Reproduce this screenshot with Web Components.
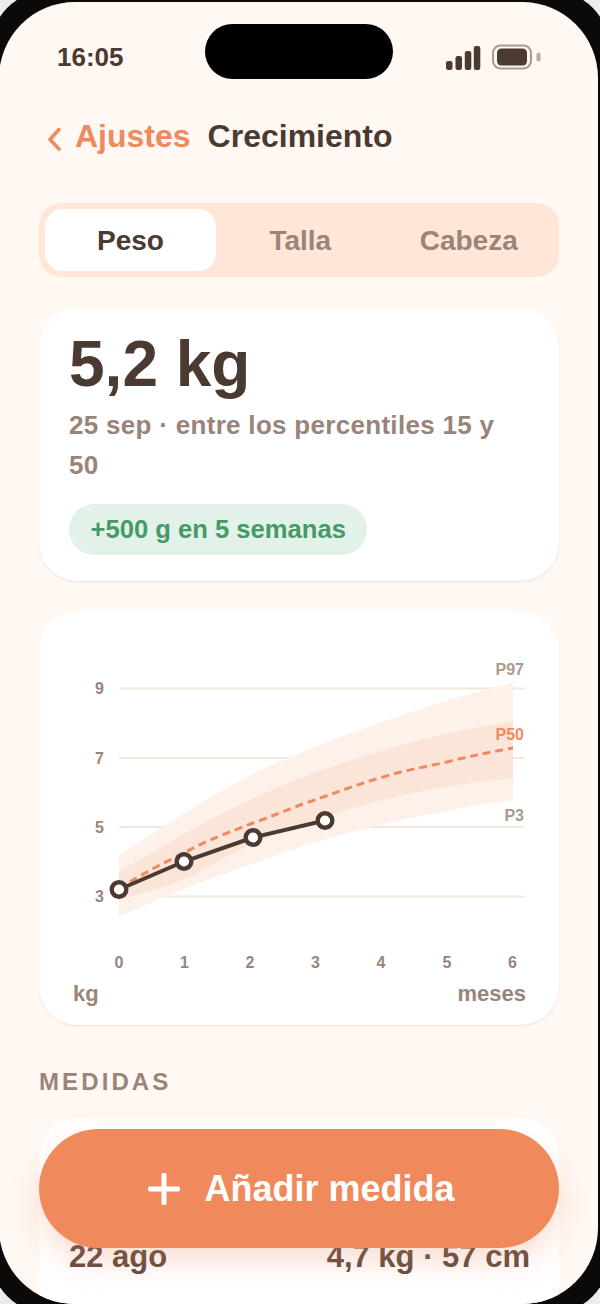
<!DOCTYPE html>
<html lang="es"><head><meta charset="utf-8"><title>Crecimiento</title>
<style>
html,body{margin:0;padding:0;width:600px;height:1304px;overflow:hidden;background:#ececec;font-family:"Liberation Sans",Arial,sans-serif;}
</style></head><body>
<phone-frame>
  <status-bar></status-bar>
  <nav-header back="Ajustes" title="Crecimiento"></nav-header>
  <seg-tabs items="Peso,Talla,Cabeza"></seg-tabs>
  <summary-card value="5,2 kg" sub="25 sep · entre los percentiles 15 y 50" pill="+500 g en 5 semanas"></summary-card>
  <growth-chart></growth-chart>
  <section-title>MEDIDAS</section-title>
  <measure-list>
    <measure-row></measure-row>
    <measure-row date="22 ago" val="4,7 kg · 57 cm"></measure-row>
  </measure-list>
  <add-button slot="fab">Añadir medida</add-button>
</phone-frame>
<script>
function def(name, html){
  customElements.define(name, class extends HTMLElement{
    constructor(){super();this.attachShadow({mode:'open'});}
    connectedCallback(){
      const get=k=>this.getAttribute(k)||'';
      this.shadowRoot.innerHTML=typeof html==='function'?html(get):html;
    }
  });
}
def('phone-frame',`<style>
:host{display:block;width:620px;height:1324px;margin:-10px;box-sizing:border-box;padding:12px 12px 10px 9px;background:#0b0a09;border-radius:60px;}
.screen{position:relative;width:599px;height:1302px;background:#fff8f3;border-radius:76px;overflow:hidden;box-sizing:border-box;padding:0 39px 0 40px;color:#4a3a32;}
.island{position:absolute;left:206px;top:22px;width:188px;height:55px;border-radius:28px;background:#000;}
</style><div class="screen"><div class="island"></div><slot></slot><slot name="fab"></slot></div>`);
def('status-bar',`<style>
:host{display:flex;align-items:center;justify-content:space-between;height:34px;padding:38px 18px 0 18px;}
.t{font:700 26px/34px "Liberation Sans",Arial,sans-serif;color:#4a3a32;}
svg{display:block;}
</style><span class="t">16:05</span>
<svg width="96" height="28" viewBox="0 0 96 28" style="margin-top:1px">
<g fill="#4a3a32"><rect x="1" y="17" width="6.500" height="9" rx="2.200"/><rect x="10.500" y="12" width="6.500" height="14" rx="2.200"/><rect x="19.800" y="7" width="6.500" height="19" rx="2.200"/><rect x="28.800" y="2" width="6.500" height="24" rx="2.200"/>
<rect x="52" y="4.500" width="30" height="17" rx="4.500"/></g>
<rect x="48" y="1.500" width="38" height="23" rx="7.500" fill="none" stroke="#a89a92" stroke-width="2"/>
<rect x="91.500" y="8.500" width="4" height="9" rx="2" fill="#b9aca4"/>
</svg>`);
def('nav-header',g=>`<style>
:host{display:flex;align-items:center;height:40px;margin-top:42px;font:700 32px/40px "Liberation Sans",Arial,sans-serif;}
svg{display:block;margin:6px 14px 0 8px;}
.b{color:#ef8a5e;margin-right:17px;}.t{color:#4a3a32;}
</style><svg width="14" height="24" viewBox="0 0 14 24"><path d="M12 2.500 L3 12.500 L12 22" fill="none" stroke="#ef8a5e" stroke-width="3.600" stroke-linecap="round" stroke-linejoin="round"/></svg><span class="b">${g('back')}</span><span class="t">${g('title')}</span>`);
def('seg-tabs',g=>`<style>
:host{display:grid;grid-template-columns:171px 1fr 1fr;margin-top:47px;height:74px;box-sizing:border-box;padding:6px;background:#ffe6d7;border-radius:22px;font:700 28px/64px "Liberation Sans",Arial,sans-serif;color:#9a8479;text-align:center;}
div{height:62px;}
.on{background:#fff;border-radius:18px;color:#4a3a32;}
</style>${g('items').split(',').map((x,i)=>`<div class="${i?'':'on'}">${x}</div>`).join('')}`);
def('summary-card',g=>`<style>
:host{display:block;margin-top:31px;padding:20px 30px 26px;background:#fff;border-radius:38px;box-shadow:0 1px 2px #f3dfd0;font-family:"Liberation Sans",Arial,sans-serif;}
.v{font:700 64px/72px "Liberation Sans",Arial,sans-serif;color:#4a3a32;}
.s{margin-top:5px;font:700 26px/40px "Liberation Sans",Arial,sans-serif;letter-spacing:.3px;color:#9a8479;}
.p{display:inline-block;margin-top:19px;height:51px;padding:0 21.500px;border-radius:26px;background:#e3f2e9;color:#459a68;font:700 25.600px/51px "Liberation Sans",Arial,sans-serif;}
</style><div class="v">${g('value')}</div><div class="s">${g('sub')}</div><span class="p">${g('pill')}</span>`);
def('growth-chart',`<style>
:host{display:block;margin-top:30px;background:#fff;border-radius:38px;box-shadow:0 1px 2px #f3dfd0;height:414px;}
svg{display:block;}
text{font-family:"Liberation Sans",Arial,sans-serif;font-weight:700;}
</style>
<svg width="520" height="414" viewBox="39 611 520 414">
<g stroke="#f6e7dc" stroke-width="2"><path d="M119 688.500H524M119 758H524M119 827H524M119 896.500H524"/></g>
<path d="M119 855 C145 839 170 822 193 808 C225 788 262 768 300 753 C370 725 440 700 513 683 L513 800 C440 810 370 825 300 847 C240 868 170 892 119 917Z" fill="#fdf1e9"/>
<path d="M119 872 C145 856 170 842 193 829 C225 810 262 794 300 778 C370 752 440 732 513 721 L513 778 C440 785 370 800 300 825 C260 840 225 855 193 876 C170 885 145 893 119 900Z" fill="#fbe5d8"/>
<path d="M119 889 C140 875 165 862 184 853 C205 841 230 832 253 823 C270 817 285 811 300 805 C330 795 355 785 383 777 C405 770 425 767 447 762 C470 756 490 752 513 748" fill="none" stroke="#ef8a5e" stroke-width="3" stroke-dasharray="8 5"/>
<path d="M119 889.500 L184 861.500 L253 837.500 L325 820.500" fill="none" stroke="#4a3a32" stroke-width="4"/>
<g fill="#fff" stroke="#4a3a32" stroke-width="4.400"><circle cx="119" cy="889.500" r="7.300"/><circle cx="184" cy="861.500" r="7.300"/><circle cx="253" cy="837.500" r="7.300"/><circle cx="325" cy="820.500" r="7.300"/></g>
<g font-size="16" fill="#9a8479" text-anchor="end"><text x="104" y="694">9</text><text x="104" y="764">7</text><text x="104" y="833">5</text><text x="104" y="902">3</text></g>
<g font-size="16" fill="#9a8479" text-anchor="middle"><text x="119" y="968">0</text><text x="184.500" y="968">1</text><text x="250" y="968">2</text><text x="315.500" y="968">3</text><text x="381" y="968">4</text><text x="447" y="968">5</text><text x="512.500" y="968">6</text></g>
<g font-size="16" text-anchor="end"><text x="524" y="675" fill="#ab9a90">P97</text><text x="524" y="740" fill="#ef8a5e">P50</text><text x="524" y="821" fill="#ab9a90">P3</text></g>
<text x="73" y="1001" font-size="22" fill="#9a8479">kg</text>
<text x="526" y="1001" font-size="22" fill="#9a8479" text-anchor="end">meses</text>
</svg>`);
def('section-title',`<style>
:host{display:block;margin-top:42px;height:30px;font:700 24px/30px "Liberation Sans",Arial,sans-serif;letter-spacing:3.100px;color:#9a8479;}
</style><slot></slot>`);
def('measure-list',`<style>
:host{display:block;margin-top:21px;background:#fff;border-radius:38px 38px 0 0;}
</style><slot></slot>`);
def('measure-row',g=>`<style>
:host{display:flex;justify-content:space-between;align-items:flex-start;box-sizing:border-box;height:95px;padding:0 29px 0 30px;font:700 31px/40px "Liberation Sans",Arial,sans-serif;color:#604a3f;}
:host([date]){height:100px;border-top:1px solid #f3ebe4;padding-top:23px;}
</style><span>${g('date')}</span><span>${g('val')}</span>`);
def('add-button',`<style>
:host{position:absolute;left:40px;top:1127px;width:520px;height:119px;box-sizing:border-box;padding-left:5px;border-radius:60px;background:#f0895c;box-shadow:0 14px 30px rgba(240,137,92,.28);display:flex;align-items:center;justify-content:center;gap:24px;color:#fff;font:700 36px/44px "Liberation Sans",Arial,sans-serif;}
svg{display:block;}
</style><svg width="32" height="32" viewBox="0 0 32 32"><path d="M16 2V30M2 16H30" stroke="#fff" stroke-width="5" stroke-linecap="round"/></svg><span><slot></slot></span>`);
</script>
</body></html>
